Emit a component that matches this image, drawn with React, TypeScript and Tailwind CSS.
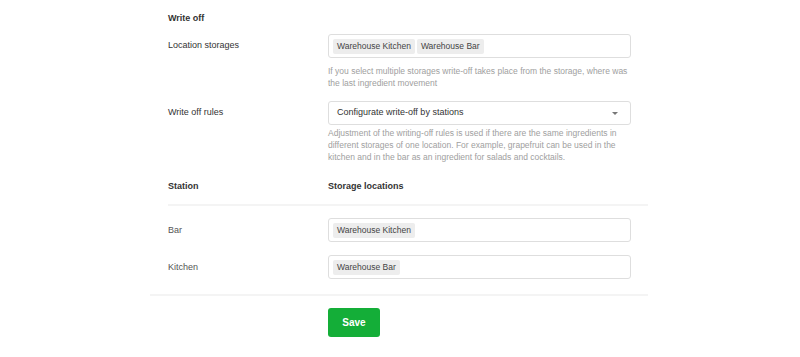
const font = { fontFamily: '"Liberation Sans", Arial, sans-serif' };

function Tag({ label }: { label: string }) {
  return (
    <span className="flex h-[15px] items-center rounded-[2px] bg-[#ededed] px-[4px] text-[8.5px] leading-none text-[#444]">
      {label}
    </span>
  );
}

function TagInput({ tags }: { tags: string[] }) {
  return (
    <div className="flex h-[24px] items-center gap-[2px] rounded-[3px] border border-[#dedede] bg-white px-[4px]">
      {tags.map((t) => (
        <Tag key={t} label={t} />
      ))}
    </div>
  );
}

export default function App() {
  const stations = [
    { name: "Bar", storage: "Warehouse Kitchen" },
    { name: "Kitchen", storage: "Warehouse Bar" },
  ];

  return (
    <div className="h-[357px] w-[800px] bg-white" style={font}>
      <div className="ml-[150px] w-[498px]">
        {/* Write off settings */}
        <div className="pl-[18px] pr-[17px] pt-[12px]">
          <h3 className="text-[9px] font-bold leading-[12px] text-[#333]">Write off</h3>

          <div className="mt-[10px] grid grid-cols-[160px_1fr]">
            <div className="flex h-[24px] items-center text-[9px] text-[#333]">Location storages</div>
            <div>
              <TagInput tags={["Warehouse Kitchen", "Warehouse Bar"]} />
              <p className="mt-[7px] text-[8.5px] leading-[12px] text-[#a0a0a0]">
                If you select multiple storages write-off takes place from the storage, where was the last
                ingredient movement
              </p>
            </div>
          </div>

          <div className="mt-[12px] grid grid-cols-[160px_1fr]">
            <div className="flex h-[24px] items-center text-[9px] text-[#333]">Write off rules</div>
            <div>
              <div className="flex h-[24px] items-center justify-between rounded-[3px] border border-[#dedede] bg-white pl-[8px] pr-[12px]">
                <span className="text-[9px] text-[#333]">Configurate write-off by stations</span>
                <svg width="6" height="3" viewBox="0 0 6 3">
                  <path d="M0 0h6L3 3z" fill="#777" />
                </svg>
              </div>
              <p className="mt-[3px] text-[8.5px] leading-[11.75px] text-[#a0a0a0]">
                Adjustment of the writing-off rules is used if there are the same ingredients in different
                storages of one location. For example, grapefruit can be used in the kitchen and in the bar as
                an ingredient for salads and cocktails.
              </p>
            </div>
          </div>

          <div className="mt-[17px] grid grid-cols-[160px_1fr] text-[9px] font-bold leading-[12px] text-[#333]">
            <div>Station</div>
            <div>Storage locations</div>
          </div>
        </div>

        <div className="ml-[18px] mt-[12px] h-[2px] bg-[#f4f4f4]" />

        {/* Stations */}
        <div className="flex flex-col gap-[13px] pl-[18px] pr-[17px] pt-[12px]">
          {stations.map((s) => (
            <div key={s.name} className="grid grid-cols-[160px_1fr]">
              <div className="flex h-[24px] items-center text-[9px] text-[#555]">{s.name}</div>
              <TagInput tags={[s.storage]} />
            </div>
          ))}
        </div>

        <div className="mt-[15px] h-[2px] bg-[#f4f4f4]" />

        <button className="ml-[178px] mt-[12px] flex h-[29px] w-[52px] items-center justify-center rounded-[3px] bg-[#14ae38] text-[10px] font-bold text-white">
          Save
        </button>
      </div>
    </div>
  );
}
